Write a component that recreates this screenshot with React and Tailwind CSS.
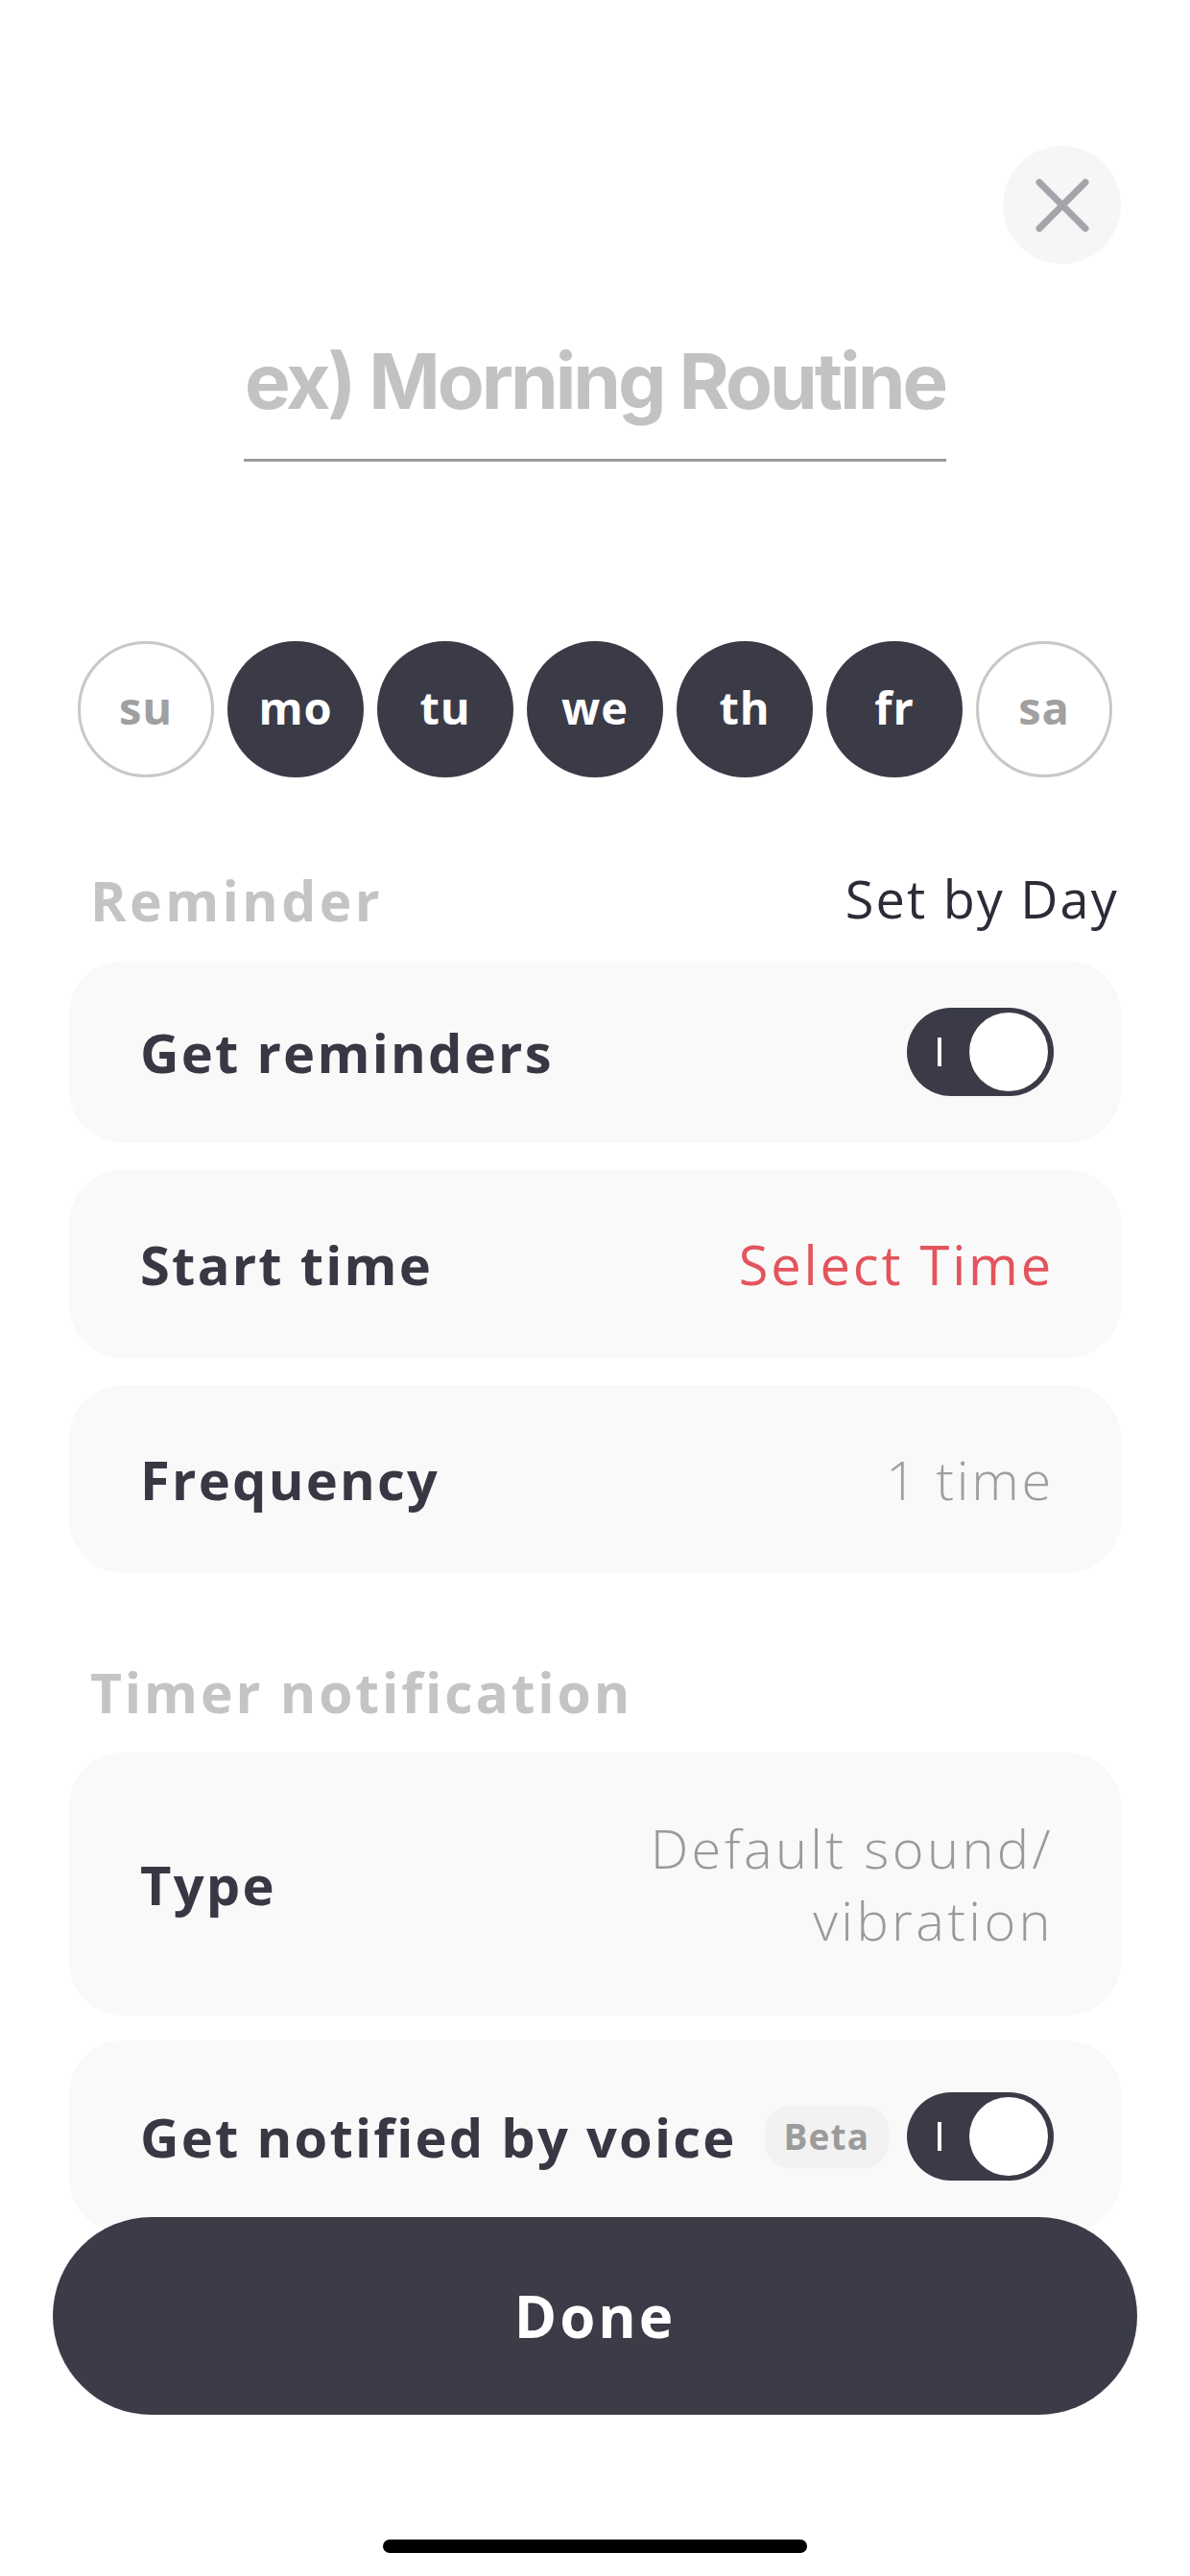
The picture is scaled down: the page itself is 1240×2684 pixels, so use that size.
import React, { useState } from "react";

const DAYS = [
  { key: "su", on: false },
  { key: "mo", on: true },
  { key: "tu", on: true },
  { key: "we", on: true },
  { key: "th", on: true },
  { key: "fr", on: true },
  { key: "sa", on: false },
];

const BODY = { fontFamily: '"Open Sans", "Noto Sans", sans-serif' };
const TITLE = { fontFamily: 'Inter, "Liberation Sans", sans-serif' };

function Toggle({ on, onClick }) {
  return (
    <button
      onClick={onClick}
      className="relative w-[153px] h-[92px] shrink-0 rounded-full bg-[#3a3b47]"
    >
      <span className="absolute left-[32px] top-[31px] w-[4px] h-[30px] bg-white" />
      <span
        className={
          "absolute top-[5px] w-[82px] h-[82px] rounded-full bg-white " +
          (on ? "right-[6px]" : "left-[6px]")
        }
      />
    </button>
  );
}

function Card({ h, children }) {
  return (
    <div
      className={`flex items-center justify-between rounded-[56px] bg-[#f9f9f9] pl-[74px] pr-[70px] ${h}`}
    >
      {children}
    </div>
  );
}

function Label({ children }) {
  return (
    <div className="text-[56px] font-bold text-[#383845] tracking-[0.04em] whitespace-nowrap">
      {children}
    </div>
  );
}

export default function App() {
  const [days, setDays] = useState(DAYS);
  const [remind, setRemind] = useState(true);
  const [voice, setVoice] = useState(true);

  function flip(k) {
    setDays(days.map((d) => (d.key === k ? { ...d, on: !d.on } : d)));
  }

  return (
    <div className="relative w-[1240px] h-[2684px] bg-white overflow-hidden" style={BODY}>
      <div className="flex justify-end pt-[152px] pr-[72px]">
        <button className="flex items-center justify-center w-[123px] h-[123px] rounded-full bg-[#f6f6f7]">
          <svg width="58" height="58" viewBox="0 0 58 58">
            <path
              d="M5 5 L53 53 M53 5 L5 53"
              stroke="#a4a4aa"
              strokeWidth="7"
              strokeLinecap="round"
            />
          </svg>
        </button>
      </div>

      {/* title input */}
      <div className="mx-auto mt-[72px] w-[732px]">
        <div
          className="text-center text-[80px] leading-[100px] font-bold tracking-[-0.038em] text-[#c2c2c2] whitespace-nowrap"
          style={TITLE}
        >
          ex) Morning Routine
        </div>
        <div className="mt-[31px] h-[3px] bg-[#9a9a9a]" />
      </div>

      {/* days */}
      <div className="mt-[187px] px-[81px] flex justify-between">
        {days.map((d) => (
          <button
            key={d.key}
            onClick={() => flip(d.key)}
            className={
              "w-[142px] h-[142px] rounded-full flex items-center justify-center text-[47px] font-bold tracking-[0.02em] pb-[4px] " +
              (d.on
                ? "bg-[#3a3b47] text-white"
                : "border-[3px] border-[#c8c8c8] text-[#a0a0a0]")
            }
          >
            {d.key}
          </button>
        ))}
      </div>

      {/* reminder */}
      <div className="mt-[89px] h-[80px] pl-[94px] pr-[74px] flex items-center justify-between">
        <div className="text-[57px] font-bold tracking-[0.06em] text-[#c4c4c4]">Reminder</div>
        <div className="text-[54px] tracking-[0.04em] text-[#2c2c38] pb-[6px]">Set by Day</div>
      </div>

      <div className="mt-[22px] mx-[72px] flex flex-col gap-[28px]">
        <Card h="h-[190px]">
          <Label>Get reminders</Label>
          <Toggle on={remind} onClick={() => setRemind(!remind)} />
        </Card>
        <Card h="h-[196px]">
          <Label>Start time</Label>
          <div className="text-[56px] tracking-[0.05em] text-[#e3545c]">Select Time</div>
        </Card>
        <Card h="h-[196px]">
          <Label>Frequency</Label>
          <div className="text-[56px] tracking-[0.05em] font-light text-[#9e9e9e]">1 time</div>
        </Card>
      </div>

      {/* timer notification */}
      <div className="mt-[85px] h-[80px] pl-[94px] flex items-center">
        <div className="text-[57px] font-bold tracking-[0.05em] text-[#c4c4c4]">Timer notification</div>
      </div>

      <div className="mt-[22px] mx-[72px] flex flex-col gap-[26px]">
        <Card h="h-[274px]">
          <Label>Type</Label>
          <div className="text-right text-[56px] leading-[75px] tracking-[0.06em] font-light text-[#9a9a9a]">
            Default sound/
            <br />
            vibration
          </div>
        </Card>
        <Card h="h-[200px]">
          <div className="flex items-center">
            <Label>Get notified by voice</Label>
            <span className="ml-[29px] h-[65px] px-[20px] flex items-center rounded-[26px] bg-[#f2f2f2] text-[37px] font-bold tracking-[0.03em] text-[#9b9b9b]">
              Beta
            </span>
          </div>
          <Toggle on={voice} onClick={() => setVoice(!voice)} />
        </Card>
      </div>

      {/* floating done */}
      <button className="absolute left-[55px] right-[55px] top-[2310px] h-[206px] rounded-full bg-[#3b3c48] text-white text-[60px] font-bold tracking-[0.05em]">
        Done
      </button>
      <div className="absolute left-[399px] top-[2646px] w-[442px] h-[14px] rounded-full bg-black" />
    </div>
  );
}
